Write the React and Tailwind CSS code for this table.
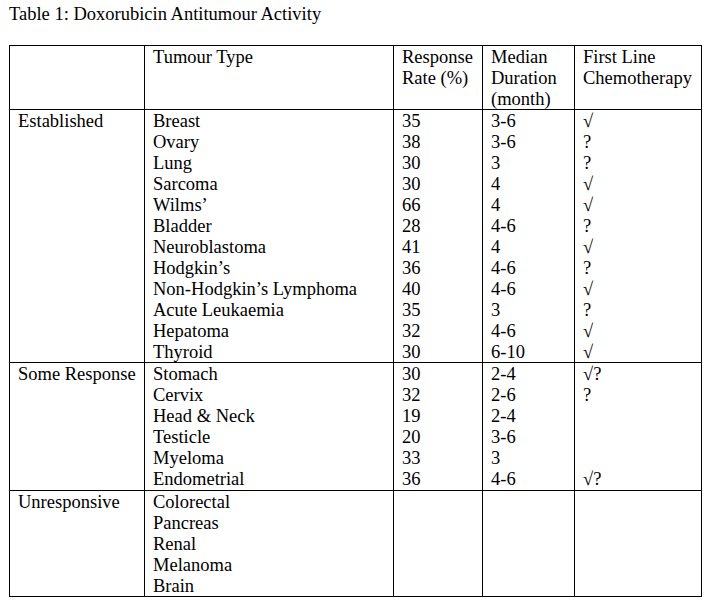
import React from "react";

const est = [
  ["Breast", "35", "3-6", "√"],
  ["Ovary", "38", "3-6", "?"],
  ["Lung", "30", "3", "?"],
  ["Sarcoma", "30", "4", "√"],
  ["Wilms’", "66", "4", "√"],
  ["Bladder", "28", "4-6", "?"],
  ["Neuroblastoma", "41", "4", "√"],
  ["Hodgkin’s", "36", "4-6", "?"],
  ["Non-Hodgkin’s Lymphoma", "40", "4-6", "√"],
  ["Acute Leukaemia", "35", "3", "?"],
  ["Hepatoma", "32", "4-6", "√"],
  ["Thyroid", "30", "6-10", "√"],
];
const some = [
  ["Stomach", "30", "2-4", "√?"],
  ["Cervix", "32", "2-6", "?"],
  ["Head & Neck", "19", "2-4", ""],
  ["Testicle", "20", "3-6", ""],
  ["Myeloma", "33", "3", ""],
  ["Endometrial", "36", "4-6", "√?"],
];
const unresp = [
  ["Colorectal", "", "", ""],
  ["Pancreas", "", "", ""],
  ["Renal", "", "", ""],
  ["Melanoma", "", "", ""],
  ["Brain", "", "", ""],
];

function Line({ children }) {
  return <div className="h-[21px] leading-[23px] whitespace-nowrap">{children}</div>;
}

function Section({ label, rows, extra = "" }) {
  const td = "border border-black align-top pl-[8px] pr-0 pt-0 " + extra;
  return (
    <tr>
      <td className={td}>
        <Line>{label}</Line>
      </td>
      {[0, 1, 2, 3].map((c) => (
        <td key={c} className={td}>
          {rows.map((r, i) => (
            <Line key={i}>{r[c]}</Line>
          ))}
        </td>
      ))}
    </tr>
  );
}

export default function App() {
  const th = "border border-black align-top pl-[8px] pt-0 pb-0 font-normal text-left";
  return (
    <div
      className="w-[711px] h-[608px] bg-white text-black text-[18.5px] leading-[21px]"
      style={{ fontFamily: '"Liberation Serif", "Times New Roman", serif' }}
    >
      <div className="pt-[4px] pl-[9px] h-[24px] whitespace-nowrap">Table 1: Doxorubicin Antitumour Activity</div>
      <table className="mt-[21px] ml-[9px] w-[692px] table-fixed border-collapse">
        <colgroup>
          <col className="w-[135px]" />
          <col className="w-[249px]" />
          <col className="w-[89px]" />
          <col className="w-[92px]" />
          <col className="w-[127px]" />
        </colgroup>
        <thead>
          <tr>
            <th className={th}>
              <div className="h-[63px]"></div>
            </th>
            <th className={th}>
              <Line>Tumour Type</Line>
            </th>
            <th className={th}>
              <Line>Response</Line>
              <Line>Rate (%)</Line>
            </th>
            <th className={th}>
              <Line>Median</Line>
              <Line>Duration</Line>
              <Line>(month)</Line>
            </th>
            <th className={th}>
              <Line>First Line</Line>
              <Line>Chemotherapy</Line>
            </th>
          </tr>
        </thead>
        <tbody>
          <Section label="Established" rows={est} />
          <Section label="Some Response" rows={some} extra="pb-[1px]" />
          <Section label="Unresponsive" rows={unresp} />
        </tbody>
      </table>
    </div>
  );
}
